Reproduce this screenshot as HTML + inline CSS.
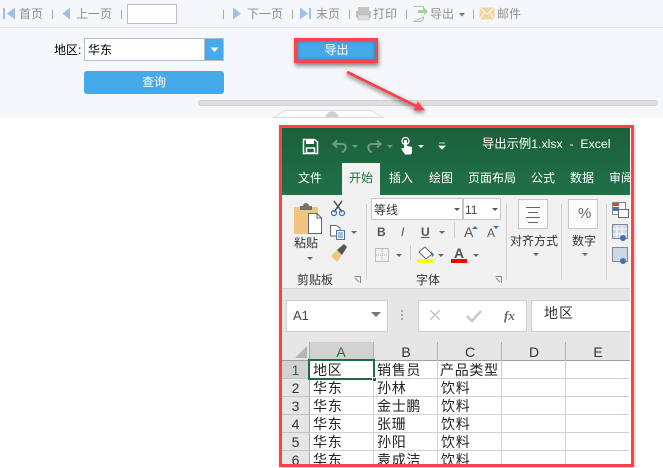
<!DOCTYPE html>
<html lang="zh">
<head>
<meta charset="utf-8">
<style>
html,body{margin:0;padding:0;background:#fff}
body{width:663px;height:468px;overflow:hidden;position:relative;font-family:"Liberation Sans","Noto Sans CJK SC",sans-serif;font-size:12px;color:#000}
div,span,svg{position:absolute;box-sizing:border-box;white-space:nowrap}
.t{line-height:16px;height:16px}
.tb{color:#8f8f8f;font-size:12px;top:6px}
.sep{top:10px;width:1px;height:9px;background:#aaa}
.g{color:#fff;font-size:12px}
.c{font-size:14px;letter-spacing:.7px;line-height:18px;height:18px;color:#222;margin-top:1px}
.h{font-size:14px;line-height:18px;height:18px;text-align:center;color:#333;margin-top:1px}
.lv{left:309px;width:320px;height:1px;background:#d0d0d0}
.lh{top:360px;height:105px;width:1px;background:#d0d0d0}
.rb{font-size:12px;color:#333;line-height:16px;height:16px}
</style>
</head>
<body>
<!-- report page background -->
<div style="left:0;top:0;width:663px;height:118px;background:#f6f7fb"></div>
<div style="left:0;top:27px;width:663px;height:1px;background:#e3e4e8"></div>

<!-- toolbar -->
<svg style="left:0;top:0" width="663" height="28" viewBox="0 0 663 28">
<rect x="3" y="8" width="2" height="11" fill="#9dc0e4"/>
<path d="M15 7.500V19.500L7 13.500Z" fill="#9dc0e4"/>
<path d="M70 7.500V19.500L62.500 13.500Z" fill="#9dc0e4"/>
<path d="M233 7.500V19.500L241 13.500Z" fill="#9dc0e4"/>
<path d="M300 7.500V19.500L308 13.500Z" fill="#9dc0e4"/>
<rect x="309" y="8" width="2" height="11" fill="#9dc0e4"/>
<rect x="358" y="7" width="11" height="5" fill="#c5c5c5"/><rect x="356" y="11" width="15" height="7" rx="1" fill="#c0c0c0"/><rect x="358" y="15" width="11" height="5" fill="#ddd" stroke="#bbb" stroke-width=".5"/>
<path d="M413.500 6.500H423.500V10M423.500 17V19L421 21.500H413.500Z" fill="#fff" stroke="#bbb"/>
<path d="M418 10H424V7.500L428 11.500L424 15V13H418Z" fill="#98d3a0"/>
<path d="M459 13L465 13L462 16.500Z" fill="#777"/>
<rect x="479.500" y="7.500" width="15" height="12" fill="#f2d5a5"/>
<path d="M479.500 7.500L487 14L494.500 7.500M479.500 19.500L485 12M494.500 19.500L489 12" fill="none" stroke="#fff" stroke-width=".8"/>
</svg>
<div class="t tb" style="left:19px">首页</div>
<div class="sep" style="left:52px"></div>
<div class="t tb" style="left:76px">上一页</div>
<div class="sep" style="left:121px"></div>
<div style="left:127px;top:4px;width:50px;height:20px;background:#fff;border:1px solid #b8bdd0"></div>
<div class="sep" style="left:223px"></div>
<div class="t tb" style="left:247px">下一页</div>
<div class="sep" style="left:292px"></div>
<div class="t tb" style="left:316px">末页</div>
<div class="sep" style="left:349px"></div>
<div class="t tb" style="left:373px">打印</div>
<div class="sep" style="left:406px"></div>
<div class="t tb" style="left:430px">导出</div>
<div class="sep" style="left:473px"></div>
<div class="t tb" style="left:497px">邮件</div>

<!-- form -->
<div class="t" style="left:54px;top:42px;font-size:12px">地区:</div>
<div style="left:84px;top:38px;width:140px;height:23px;background:#fff;border:1px solid #b8bdd0"></div>
<div class="t" style="left:88px;top:42px;font-size:12px">华东</div>
<div style="left:204px;top:38px;width:20px;height:23px;background:#45a9ea;border:1px solid #b5bcc4"></div>
<svg style="left:210px;top:47px" width="9" height="6"><path d="M0.500 0.500H8.500L4.500 5Z" fill="#fff"/></svg>
<div class="t" style="left:84px;top:71px;width:140px;height:23px;line-height:23px;background:#45a9ea;border-radius:3px;color:#fff;text-align:center;font-size:12px">查询</div>

<!-- export button -->
<div style="left:294px;top:38px;width:84px;height:25px;background:#45a9ea;border:3px solid #fa4248;box-shadow:inset 0 0 4px #2a78b5,1px 3px 4px rgba(0,0,0,.45)"></div>
<div class="t" style="left:294px;top:42px;width:85px;text-align:center;color:#fff;font-size:12px">导出</div>

<!-- scrollbar and splitter -->
<div style="left:198px;top:100px;width:460px;height:6px;background:#dedede;border:1px solid #d4d4d4;border-radius:3px"></div>
<svg style="left:270px;top:108px" width="120" height="11">
<path d="M3 10L15 2.500H101L114 10" fill="#fff" stroke="#dcdcdc"/>
<path d="M3 9.500H114" stroke="#dcdcdc"/>
<path d="M59 3.500H65L69 9H55Z" fill="#cfcfcf"/>
</svg>

<!-- arrow -->
<svg style="left:340px;top:65px;filter:drop-shadow(0 2px 2px rgba(0,0,0,.55))" width="100" height="60">
<path d="M7 7L78 42" stroke="#fa4248" stroke-width="2.800" fill="none"/>
<path d="M85 45.500L74 45L77.800 36.500Z" fill="#fa4248"/>
</svg>

<!-- excel window -->
<div style="left:279px;top:125px;width:355px;height:342px;background:#fff;box-shadow:1px 1px 3px rgba(0,0,0,.25)"></div>
<div style="left:282px;top:128px;width:348px;height:67px;background:linear-gradient(#1b6038,#20704a)"></div>
<div style="left:282px;top:195px;width:348px;height:93px;background:#f1f1f1"></div>
<div style="left:282px;top:288px;width:348px;height:1px;background:#d4d4d4"></div>
<div style="left:282px;top:289px;width:348px;height:53px;background:#e6e6e6"></div>

<!-- title bar icons -->
<svg style="left:282px;top:128px" width="180" height="32" viewBox="0 0 180 32">
<path d="M21.500 11.500H32.500L35.500 14V25.500H21.500Z" fill="none" stroke="#fff" stroke-width="1.500"/>
<rect x="24" y="11" width="8" height="5" fill="#fff"/><rect x="24.500" y="20" width="8" height="5" fill="none" stroke="#fff" stroke-width="1.500"/>
<path d="M55 12.500L51.500 16L55 19.500M52 16H60C65 16 65 23 60 24" fill="none" stroke="#6f9c82" stroke-width="2"/>
<path d="M70 17H76L73 20Z" fill="#6f9c82"/>
<path d="M95 12.500L98.500 16L95 19.500M98 16H90C85 16 85 23 90 24" fill="none" stroke="#6f9c82" stroke-width="2"/>
<path d="M105 17H111L108 20Z" fill="#6f9c82"/>
<path d="M122 12h3v6l5 1v5c0 1.500-1 2.500-2 2.500h-5l-4-6 3-.500z" fill="#fff"/>
<circle cx="123.500" cy="13" r="3.500" fill="none" stroke="#fff" stroke-width="1.300"/>
<path d="M136 17H142L139 20Z" fill="#fff"/>
<path d="M157 15H163M157 18H163L160 21Z" stroke="#fff" stroke-width=".8" fill="#fff"/>
</svg>
<div class="t g" style="left:482px;top:136px;font-size:12.300px">导出示例1.xlsx&nbsp; -&nbsp; Excel</div>

<!-- tabs -->
<div style="left:342px;top:163px;width:38px;height:32px;background:#f1f1f1"></div>
<div class="t g" style="left:298px;top:170px">文件</div>
<div class="t" style="left:349px;top:170px;color:#1e6c41;font-size:12px">开始</div>
<div class="t g" style="left:389px;top:170px">插入</div>
<div class="t g" style="left:429px;top:170px">绘图</div>
<div class="t g" style="left:468px;top:170px">页面布局</div>
<div class="t g" style="left:531px;top:170px">公式</div>
<div class="t g" style="left:570px;top:170px">数据</div>
<div class="t g" style="left:609px;top:170px;width:21px;overflow:hidden">审阅</div>

<!-- ribbon -->
<svg style="left:282px;top:195px" width="348" height="93" viewBox="0 0 348 93">
<!-- paste -->
<rect x="12" y="12" width="24" height="27" rx="1" fill="#efc57f"/>
<path d="M18 11h3a3 3 0 016 0h3v4H18Z" fill="#74706b"/>
<path d="M26.500 18.500H35L39.500 23V38.500H26.500Z" fill="#fff" stroke="#666"/>
<path d="M35 18.500V23H39.500" fill="none" stroke="#666"/>
<path d="M25 62H31L28 65Z" fill="#666"/>
<!-- cut -->
<path d="M52 6L60 17M60 6L52 17" stroke="#555" stroke-width="1.500"/>
<circle cx="52" cy="18" r="2.500" fill="none" stroke="#3e76b5" stroke-width="1.300"/>
<circle cx="60" cy="18" r="2.500" fill="none" stroke="#3e76b5" stroke-width="1.300"/>
<!-- copy -->
<path d="M48.500 30.500H54L58 33V38H56V41H48.500Z" fill="#fff" stroke="#666"/>
<path d="M54.500 35.500H62.500V44.500H54.500Z" fill="#fff" stroke="#4a78a8"/>
<path d="M56 38H61M56 40H61M56 42H61" stroke="#4a78a8"/>
<path d="M69 36H75L72 39Z" fill="#666"/>
<!-- brush -->
<path d="M49 61L55 55L60 60L55 67Z" fill="#efc57f"/><path d="M55 55L62 49L65 52L60 60Z" fill="#555"/>
<!-- launcher -->
<path d="M72.500 81.500H78.500V88M77 87L73 83" fill="none" stroke="#888"/>
<path d="M213.500 81.500H219.500V88M218 87L214 83" fill="none" stroke="#888"/>
<!-- group separators -->
<path d="M84.500 9V85M224.500 9V85M279.500 9V85M324.500 9V85" stroke="#d0d0d0"/>
<!-- font boxes -->
<rect x="89.500" y="3.500" width="91" height="21" fill="#fff" stroke="#c6c6c6"/>
<rect x="181.500" y="3.500" width="37" height="21" fill="#fff" stroke="#c6c6c6"/>
<path d="M172 13H178L175 16Z" fill="#555"/>
<path d="M210 13H216L213 16Z" fill="#555"/>
<!-- font row 2 -->
<path d="M157 36H163L160 39Z" fill="#666"/>
<path d="M172.500 27V43" stroke="#ccc"/>
<path d="M190 34L193 31L196 34Z" fill="#3e76b5"/>
<path d="M211 31L214 34L217 31Z" fill="#3e76b5"/>
<!-- font row 3 -->
<rect x="93.500" y="53.500" width="13" height="13" fill="none" stroke="#888" stroke-dasharray="1 1"/>
<path d="M100 54V66M94 60H106" stroke="#aaa" stroke-dasharray="1 1"/>
<path d="M114 59H120L117 62Z" fill="#666"/>
<path d="M128.500 50V65" stroke="#ccc"/>
<path d="M143 52l7 7-6 5-7-7z" fill="#fff" stroke="#666"/><path d="M149 56L152 60L150 62Z" fill="#3e76b5"/>
<rect x="135" y="64" width="16" height="4" fill="#ff0"/>
<path d="M156 59H162L159 62Z" fill="#666"/>
<rect x="169" y="64" width="16" height="4" fill="#f00"/>
<path d="M191 59H197L194 62Z" fill="#666"/>
<!-- align & number -->
<rect x="236.500" y="4.500" width="29" height="29" fill="#fbfbfb" stroke="#c6c6c6"/>
<path d="M244 12.500H258M246 17.500H256M244 22.500H258M246 27.500H256" stroke="#666"/>
<path d="M251 58H257L254 61Z" fill="#666"/>
<rect x="286.500" y="4.500" width="29" height="29" fill="#fbfbfb" stroke="#c6c6c6"/>
<path d="M300 58H306L303 61Z" fill="#666"/>
<!-- right icons -->
<rect x="330.500" y="7.500" width="13" height="12" fill="#fff" stroke="#888"/><rect x="331" y="8" width="6" height="3" fill="#c5502e"/><rect x="331" y="12" width="6" height="4" fill="#3e76b5"/>
<rect x="336.500" y="14.500" width="10" height="8" fill="#fff" stroke="#666"/>
<rect x="330.500" y="29.500" width="15" height="14" fill="#cdd7e5" stroke="#888"/>
<path d="M335 30V43M340 30V43M331 34H345M331 39H345" stroke="#fff"/>
<circle cx="341" cy="43" r="3" fill="#3e76b5"/>
<rect x="330.500" y="52.500" width="15" height="14" fill="#cdd7e5" stroke="#888"/>
<circle cx="341" cy="66" r="3" fill="#3e76b5"/>
</svg>
<div class="rb" style="left:294px;top:235px;font-size:12px">粘贴</div>
<div class="rb" style="left:297px;top:272px;font-size:12px">剪贴板</div>
<div class="rb" style="left:416px;top:272px;font-size:12px">字体</div>
<div class="rb" style="left:374px;top:202px;font-size:12px">等线</div>
<div class="rb" style="left:465px;top:202px;font-size:12px;color:#444">11</div>
<div class="rb" style="left:377px;top:224px;font-weight:bold;color:#555">B</div>
<div class="rb" style="left:401px;top:224px;font-style:italic;color:#555">I</div>
<div class="rb" style="left:421px;top:224px;text-decoration:underline;font-weight:bold;color:#555">U</div>
<div class="rb" style="left:464px;top:224px;font-size:14px;color:#555">A</div>
<div class="rb" style="left:487px;top:225px;font-size:12px;color:#555">A</div>
<div class="rb" style="left:454px;top:245px;font-size:14px;color:#555;font-weight:bold">A</div>
<div class="rb" style="left:510px;top:233px">对齐方式</div>
<div class="rb" style="left:572px;top:233px">数字</div>
<div class="rb" style="left:578px;top:206px;font-size:15px;color:#666">%</div>

<!-- formula bar -->
<div style="left:286px;top:300px;width:102px;height:32px;background:#fff;border:1px solid #d0d0d0"></div>
<div class="rb" style="left:293px;top:308px;font-size:13px;color:#444">A1</div>
<svg style="left:370px;top:311px" width="12" height="8"><path d="M1 1H11L6 6Z" fill="#777"/></svg>
<svg style="left:400px;top:310px" width="6" height="12"><path d="M2 0V2M2 4V6M2 8V10" stroke="#aaa" stroke-width="2"/></svg>
<div style="left:418px;top:300px;width:109px;height:32px;background:#fff;border:1px solid #d0d0d0"></div>
<svg style="left:428px;top:308px" width="60" height="16"><path d="M2 2L12 12M12 2L2 12" stroke="#c8c8c8" stroke-width="1.500"/><path d="M39 8L44 13L53 3" fill="none" stroke="#c8c8c8" stroke-width="2.500"/></svg>
<div class="rb" style="left:504px;top:308px;font-family:'Liberation Serif',serif;font-style:italic;font-weight:bold;font-size:13px;color:#666">fx</div>
<div style="left:531px;top:300px;width:99px;height:32px;background:#fff;border:1px solid #d0d0d0;border-right:0"></div>
<div class="rb" style="left:544px;top:304px;font-size:14px;line-height:18px;height:18px;letter-spacing:1px">地区</div>

<!-- sheet -->
<div style="left:282px;top:342px;width:348px;height:18px;background:#e6e6e6"></div>
<div style="left:282px;top:360px;width:27px;height:105px;background:#e6e6e6"></div>
<div style="left:309px;top:342px;width:64px;height:18px;background:#d2d2d2"></div>
<div style="left:282px;top:360px;width:27px;height:18px;background:#d2d2d2"></div>
<div style="left:282px;top:360px;width:348px;height:1px;background:#9e9e9e"></div>
<div style="left:309px;top:342px;width:1px;height:123px;background:#a8a8a8"></div>
<svg style="left:294px;top:345px" width="14" height="14"><path d="M13 1V13H1Z" fill="#b5b5b5"/></svg>
<div class="lh" style="left:373px"></div><div class="lh" style="left:437px"></div><div class="lh" style="left:501px"></div><div class="lh" style="left:565px"></div>
<div style="left:373px;top:342px;width:1px;height:18px;background:#b0b0b0"></div>
<div style="left:437px;top:342px;width:1px;height:18px;background:#b0b0b0"></div>
<div style="left:501px;top:342px;width:1px;height:18px;background:#b0b0b0"></div>
<div style="left:565px;top:342px;width:1px;height:18px;background:#b0b0b0"></div>
<div class="lv" style="top:378px"></div><div class="lv" style="top:396px"></div><div class="lv" style="top:414px"></div><div class="lv" style="top:432px"></div><div class="lv" style="top:450px"></div>
<div style="left:282px;top:378px;width:27px;height:1px;background:#c4c4c4"></div><div style="left:282px;top:396px;width:27px;height:1px;background:#c4c4c4"></div><div style="left:282px;top:414px;width:27px;height:1px;background:#c4c4c4"></div><div style="left:282px;top:432px;width:27px;height:1px;background:#c4c4c4"></div><div style="left:282px;top:450px;width:27px;height:1px;background:#c4c4c4"></div>

<div class="h" style="left:309px;top:342px;width:64px;color:#1e6c41">A</div>
<div class="h" style="left:374px;top:342px;width:64px">B</div>
<div class="h" style="left:438px;top:342px;width:64px">C</div>
<div class="h" style="left:502px;top:342px;width:64px">D</div>
<div class="h" style="left:566px;top:342px;width:64px">E</div>
<div class="h" style="left:282px;top:360px;width:27px;color:#1e6c41">1</div>
<div class="h" style="left:282px;top:378px;width:27px">2</div>
<div class="h" style="left:282px;top:396px;width:27px">3</div>
<div class="h" style="left:282px;top:414px;width:27px">4</div>
<div class="h" style="left:282px;top:432px;width:27px">5</div>

<div class="c" style="left:313px;top:360px">地区</div><div class="c" style="left:377px;top:360px">销售员</div><div class="c" style="left:440px;top:360px">产品类型</div>
<div class="c" style="left:313px;top:378px">华东</div><div class="c" style="left:377px;top:378px">孙林</div><div class="c" style="left:441px;top:378px">饮料</div>
<div class="c" style="left:313px;top:396px">华东</div><div class="c" style="left:377px;top:396px">金士鹏</div><div class="c" style="left:441px;top:396px">饮料</div>
<div class="c" style="left:313px;top:414px">华东</div><div class="c" style="left:377px;top:414px">张珊</div><div class="c" style="left:441px;top:414px">饮料</div>
<div class="c" style="left:313px;top:432px">华东</div><div class="c" style="left:377px;top:432px">孙阳</div><div class="c" style="left:441px;top:432px">饮料</div>
<div style="left:282px;top:450px;width:348px;height:15px;overflow:hidden">
<div class="h" style="left:0;top:0;width:27px">6</div>
<div class="c" style="left:31px;top:0">华东</div><div class="c" style="left:95px;top:0">袁成洁</div><div class="c" style="left:159px;top:0">饮料</div>
</div>

<!-- selection -->
<div style="left:308px;top:359px;width:67px;height:21px;border:2px solid #1e6c41"></div>
<div style="left:372px;top:377px;width:5px;height:5px;background:#1e6c41;border:1px solid #fff"></div>

<!-- red frame -->
<div style="left:279px;top:125px;width:355px;height:342px;border:3px solid #fa4248"></div>
</body>
</html>
